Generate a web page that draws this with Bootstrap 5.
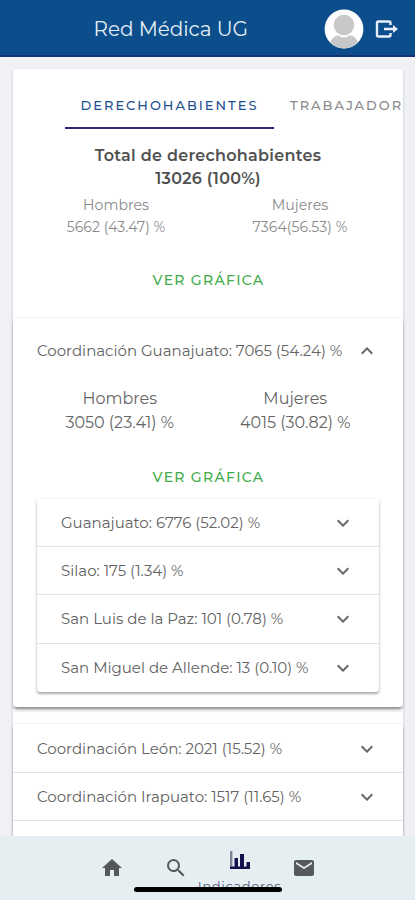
<!DOCTYPE html>
<html lang="es">
<head>
<meta charset="utf-8">
<meta name="viewport" content="width=device-width, initial-scale=1">
<title>Red Médica UG</title>
<link href="https://cdn.jsdelivr.net/npm/bootstrap@5.3.0/dist/css/bootstrap.min.css" rel="stylesheet">
<style>
html,body{height:100%}
body{font-family:Montserrat,Inter,"Open Sans",sans-serif;background:#eff1f5;color:#626262;font-size:15px;overflow:hidden}
.topbar{height:57px;background:#0b4e8b;border-bottom:2px solid #123378;padding:2px 15px 0 93.5px;color:#e4edf5}
.app-title{font-size:20px;letter-spacing:-.05px;line-height:30px}
.main-area{height:779px;overflow:hidden;padding:12px 12px 0 13px}
.sheet{background:#fff;border-radius:4px;box-shadow:0 1px 3px rgba(0,0,0,.2)}
.summary{height:248px}
.tab-strip{height:48px;margin:12px 0 0 52px;overflow:hidden;font-size:13px;font-weight:500;letter-spacing:2px;white-space:nowrap}
.tab-strip .nav-link{padding:0 0 0 16px;line-height:48px;height:48px;color:#8a8a8a;border-radius:0;flex:none}
.tab-strip .nav-link.active{width:209px;padding-left:15.5px;color:#1e4f8f;border-bottom:2px solid #2b2a7c}
.totals{font-size:16px;letter-spacing:.28px;line-height:22.5px;font-weight:600;color:#505050;margin-top:16px}
.pair{line-height:22px;font-size:14.1px;letter-spacing:.05px;color:#8a8a8a;margin-top:3.5px;padding:0 11px}
.pair-lg{line-height:24px;font-size:16px;color:#666;margin-top:4px;padding:0 20px 0 19px}
.link-chart{color:#43ab4c;font-size:14px;font-weight:500;letter-spacing:1.3px;line-height:36px;height:36px;padding:0 0 0 1px;border:0}
.summary .link-chart{margin-bottom:19px}
.panel{background:#fff;border-radius:0 0 4px 4px;box-shadow:0 3px 2px -1px rgba(0,0,0,.25),0 3px 4px -1px rgba(0,0,0,.2),0 4px 3px rgba(0,0,0,.08);border-top:1px solid #f2f2f2}
.panel-open{height:390px}
.line-item{height:48.2px;padding:1px 24px 0;border-bottom:1px solid #e4e4e4;white-space:nowrap}
.outer .line-item{height:48.5px;padding-top:2px}
.line-item:last-child{border-bottom:0}
.open-head{height:65px;padding:1px 24px 0;white-space:nowrap}
.sublist{margin:4px 24px 0;border-radius:3px;box-shadow:0 2px 2px rgba(0,0,0,.24),0 1px 4px rgba(0,0,0,.14)}
.chev{width:24px;height:24px;fill:#666}
.bottombar{height:64px;background:#e5eef0}
.bottombar .slot{width:64px}
.bottombar svg{width:24px;height:24px;fill:#55595c}
.slot-label{font-size:13px;line-height:14px;letter-spacing:.65px;color:#4d5a78;margin-top:7px}
.home-bar{position:absolute;left:134px;top:51px;width:148px;height:5px;border-radius:3px;background:#000}
</style>
</head>
<body>
<header class="topbar d-flex align-items-center">
  <div class="app-title me-auto">Red Médica UG</div>
  <svg width="40" height="40" viewBox="0 0 40 40"><defs><clipPath id="av"><circle cx="20" cy="20" r="19.4"/></clipPath></defs><g clip-path="url(#av)"><rect width="40" height="40" fill="#fff"/><circle cx="20" cy="16" r="10.3" fill="#c8c8c8"/><path d="M4 40C6 30 11 26 14.500 26.500Q20 30.500 25.500 26.500C30 26 34 30 36 40Z" fill="#c8c8c8"/></g></svg>
  <svg class="ms-2" width="28" height="24" viewBox="0 0 28 24" fill="none" stroke="#e8eef7" stroke-width="2.4" stroke-linejoin="round"><path d="M18.500 8V6Q18.500 4.500 17 4.500H6.500Q5 4.500 5 6V18Q5 19.500 6.500 19.500H17Q18.500 19.500 18.500 18V16M12 12H23"/><path d="M21 8 26 12 21 16Z" fill="#e8eef7" stroke="none"/></svg>
</header>
<main class="main-area">
  <div class="sheet">
    <section class="summary d-flex flex-column">
      <nav class="tab-strip nav flex-nowrap">
        <a class="nav-link active" href="#">DERECHOHABIENTES</a>
        <a class="nav-link" href="#">TRABAJADOR</a>
      </nav>
      <div class="totals text-center"><div>Total de derechohabientes</div><div>13026 (100%)</div></div>
      <div class="pair row g-0 text-center">
        <div class="col-6"><div>Hombres</div><div>5662 (43.47) %</div></div>
        <div class="col-6"><div>Mujeres</div><div>7364(56.53) %</div></div>
      </div>
      <button class="link-chart btn mt-auto mx-auto">VER GRÁFICA</button>
    </section>
    <section class="panel panel-open">
      <div class="open-head d-flex align-items-center justify-content-between"><span>Coordinación Guanajuato: 7065 (54.24) %</span><svg class="chev" viewBox="0 0 24 24"><path d="M12 8l-6 6 1.410 1.410L12 10.830l4.590 4.580L18 14z"/></svg></div>
      <div class="pair-lg row g-0 text-center">
        <div class="col-6"><div>Hombres</div><div>3050 (23.41) %</div></div>
        <div class="col-6"><div>Mujeres</div><div>4015 (30.82) %</div></div>
      </div>
      <div class="text-center pt-4"><button class="link-chart btn">VER GRÁFICA</button></div>
      <div class="sublist">
        <div class="line-item d-flex align-items-center justify-content-between"><span>Guanajuato: 6776 (52.02) %</span><svg class="chev" viewBox="0 0 24 24"><path d="M16.590 8.590 12 13.170 7.410 8.590 6 10l6 6 6-6z"/></svg></div>
        <div class="line-item d-flex align-items-center justify-content-between"><span>Silao: 175 (1.34) %</span><svg class="chev" viewBox="0 0 24 24"><path d="M16.590 8.590 12 13.170 7.410 8.590 6 10l6 6 6-6z"/></svg></div>
        <div class="line-item d-flex align-items-center justify-content-between"><span>San Luis de la Paz: 101 (0.78) %</span><svg class="chev" viewBox="0 0 24 24"><path d="M16.590 8.590 12 13.170 7.410 8.590 6 10l6 6 6-6z"/></svg></div>
        <div class="line-item d-flex align-items-center justify-content-between"><span>San Miguel de Allende: 13 (0.10) %</span><svg class="chev" viewBox="0 0 24 24"><path d="M16.590 8.590 12 13.170 7.410 8.590 6 10l6 6 6-6z"/></svg></div>
      </div>
    </section>
    <div class="outer pt-3">
      <section class="panel">
        <div class="line-item d-flex align-items-center justify-content-between"><span>Coordinación León: 2021 (15.52) %</span><svg class="chev" viewBox="0 0 24 24"><path d="M16.590 8.590 12 13.170 7.410 8.590 6 10l6 6 6-6z"/></svg></div>
        <div class="line-item d-flex align-items-center justify-content-between"><span>Coordinación Irapuato: 1517 (11.65) %</span><svg class="chev" viewBox="0 0 24 24"><path d="M16.590 8.590 12 13.170 7.410 8.590 6 10l6 6 6-6z"/></svg></div>
        <div class="line-item"></div>
      </section>
    </div>
  </div>
</main>
<footer class="bottombar position-relative d-flex justify-content-center">
  <div class="slot d-flex align-items-center justify-content-center"><svg viewBox="0 0 24 24"><path d="M10 20v-6h4v6h5v-8h3L12 3 2 12h3v8z"/></svg></div>
  <div class="slot d-flex align-items-center justify-content-center"><svg viewBox="0 0 24 24"><path d="M15.500 14h-.79l-.28-.27A6.470 6.470 0 0 0 16 9.500 6.500 6.500 0 1 0 9.500 16c1.610 0 3.090-.59 4.230-1.570l.27.28v.79l5 4.990L20.490 19zm-6 0C7.010 14 5 11.990 5 9.500S7.010 5 9.500 5 14 7.010 14 9.500 11.990 14 9.500 14z"/></svg></div>
  <div class="slot d-flex flex-column align-items-center pt-2 mt-1"><svg viewBox="0 0 24 24"><path d="M2 3h2.400v16.500H2z" fill="#7d8797"/><path d="M2 18.500h20V21H2zM6.500 10h3.500v9H6.500zM12 6h4v13h-4zM18.500 14h3.500v5h-3.500z" fill="#12124f"/></svg><span class="slot-label">Indicadores</span></div>
  <div class="slot d-flex align-items-center justify-content-center"><svg viewBox="0 0 24 24"><path d="M20 4H4a2 2 0 0 0-2 2v12a2 2 0 0 0 2 2h16a2 2 0 0 0 2-2V6a2 2 0 0 0-2-2zm0 4-8 5-8-5V6l8 5 8-5z"/></svg></div>
  <div class="home-bar"></div>
</footer>
<script src="https://cdn.jsdelivr.net/npm/bootstrap@5.3.0/dist/js/bootstrap.bundle.min.js"></script>
</body>
</html>
